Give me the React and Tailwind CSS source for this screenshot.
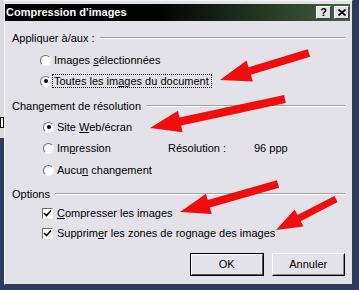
import React from 'react';

const font = { fontFamily: '"Liberation Sans", Arial, sans-serif' };

function arrowPoints(tx, ty, px, py, sw, hl, hw) {
  const dx = px - tx;
  const dy = py - ty;
  const len = Math.hypot(dx, dy);
  const ux = dx / len;
  const uy = dy / len;
  const nx = -uy;
  const ny = ux;
  const bx = px - ux * hl;
  const by = py - uy * hl;
  const pts = [
    [tx + (nx * sw) / 2, ty + (ny * sw) / 2],
    [bx + (nx * sw) / 2, by + (ny * sw) / 2],
    [bx + (nx * hw) / 2, by + (ny * hw) / 2],
    [px, py],
    [bx - (nx * hw) / 2, by - (ny * hw) / 2],
    [bx - (nx * sw) / 2, by - (ny * sw) / 2],
    [tx - (nx * sw) / 2, ty - (ny * sw) / 2],
  ];
  return pts.map((p) => p.map((v) => v.toFixed(1)).join(',')).join(' ');
}

const arrows = [
  [309, 53, 220, 80, 8, 31, 22],
  [285, 99, 150, 128, 8, 31, 22],
  [278, 184, 180, 212, 8, 30, 21],
  [336, 199, 276, 230, 7, 26, 19],
];

function Radio({ checked }) {
  return (
    <span className="relative w-[11px] h-[11px] shrink-0 rounded-full bg-white border border-t-[#6f6f74] border-l-[#6f6f74] border-r-[#f6f6f8] border-b-[#f6f6f8] flex items-center justify-center">
      {checked && <span className="w-[4px] h-[4px] rounded-full bg-black" />}
    </span>
  );
}

function Check() {
  return (
    <span className="w-[11px] h-[11px] shrink-0 bg-white border border-t-[#6f6f74] border-l-[#6f6f74] border-r-[#f6f6f8] border-b-[#f6f6f8] flex items-center justify-center">
      <svg width="9" height="9" viewBox="0 0 9 9">
        <path d="M1 4 L3.5 6.5 L8 1.5" fill="none" stroke="#000" strokeWidth="1.6" />
      </svg>
    </span>
  );
}

function GroupHeader({ label, className }) {
  return (
    <div className={`h-[14px] flex items-center ${className}`}>
      <span className="whitespace-nowrap">{label}</span>
      <div className="flex-1 ml-[5px] border-t border-t-[#a3a2a8] border-b border-b-white" />
    </div>
  );
}

export default function App() {
  return (
    <div className="relative w-[359px] h-[290px] overflow-hidden bg-[#2b3b5c] flex text-[11px] text-black" style={font}>
      <div className="w-[4px] shrink-0 flex flex-col">
        <div className="h-[117px] bg-[#d9d9de]" />
        <div className="h-[11px] border border-black bg-white" />
        <div className="h-[10px] bg-[#d9d9de]" />
        <div className="flex-1 bg-[#2b3b5c]" />
      </div>

      <div className="w-[349px] h-[285px] shrink-0 bg-[#e3e2e9] border border-t-[#f4f4f6] border-l-[#f4f4f6] border-r-[#3a3a44] border-b-[#3a3a44] flex flex-col">
        <div className="mt-[3px] mr-[2px] h-[17px] flex items-center bg-[linear-gradient(to_right,#000_0%,#020402_45%,#1e301e_70%,#44633f_100%)]">
          <span className="pl-[1px] font-bold text-white flex-1">Compression d'images</span>
          <div className="flex gap-[3px] pr-[1px]">
            <span className="w-[15px] h-[13px] bg-[#e3e2e9] border border-t-white border-l-white border-r-[#404048] border-b-[#404048] flex items-center justify-center font-bold text-[11px] leading-none">?</span>
            <span className="w-[15px] h-[13px] bg-[#e3e2e9] border border-t-white border-l-white border-r-[#404048] border-b-[#404048] flex items-center justify-center">
              <svg width="8" height="7" viewBox="0 0 8 7">
                <path d="M0.5 0.5 L7.5 6.5 M7.5 0.5 L0.5 6.5" stroke="#000" strokeWidth="1.7" />
              </svg>
            </span>
          </div>
        </div>

        <div className="pl-[7px] pr-[7px] flex flex-col">
          <GroupHeader label="Appliquer à/aux :" className="mt-[10px]" />

          <div className="mt-[8px] h-[14px] flex items-center pl-[28px]">
            <Radio />
            <span className="ml-[1px] border border-transparent pl-[1px] pr-[1px] leading-[12px]">
              Images <u>s</u>électionnées
            </span>
          </div>
          <div className="mt-[7px] h-[14px] flex items-center pl-[28px]">
            <Radio checked />
            <span className="ml-[1px] border border-dotted border-black pl-[1px] pr-[2px] leading-[12px]">
              Toutes les im<u>a</u>ges du document
            </span>
          </div>

          <GroupHeader label="Changement de résolution" className="mt-[11px]" />

          <div className="mt-[7px] h-[14px] flex items-center pl-[31px]">
            <Radio checked />
            <span className="ml-[3px]">
              Site <u>W</u>eb/écran
            </span>
          </div>
          <div className="mt-[7px] h-[14px] flex items-center pl-[31px]">
            <div className="w-[125px] flex items-center">
              <Radio />
              <span className="ml-[3px]">
                Im<u>p</u>ression
              </span>
            </div>
            <span className="w-[86px]">Résolution :</span>
            <span>96 ppp</span>
          </div>
          <div className="mt-[8px] h-[14px] flex items-center pl-[31px]">
            <Radio />
            <span className="ml-[3px]">
              Aucu<u>n</u> changement
            </span>
          </div>

          <GroupHeader label="Options" className="mt-[10px]" />

          <div className="mt-[5px] h-[14px] flex items-center pl-[30px]">
            <Check />
            <span className="ml-[4px]">
              <u>C</u>ompresser les images
            </span>
          </div>
          <div className="mt-[6px] h-[14px] flex items-center pl-[30px]">
            <Check />
            <span className="ml-[4px]">
              Supprim<u>e</u>r les zones de rognage des images
            </span>
          </div>

          <div className="mt-[13px] flex gap-[8px] pl-[178px]">
            <div className="w-[74px] h-[23px] border border-black">
              <div className="w-full h-full border border-t-white border-l-white border-r-[#55555c] border-b-[#55555c] flex items-center justify-center">
                OK
              </div>
            </div>
            <div className="w-[74px] h-[23px] border border-t-white border-l-white border-r-black border-b-black">
              <div className="w-full h-full border border-t-[#e3e2e9] border-l-[#e3e2e9] border-r-[#88888f] border-b-[#88888f] flex items-center justify-center">
                Annuler
              </div>
            </div>
          </div>
        </div>
      </div>

      <div className="flex-1 bg-[#2b3b5c]" />

      <svg className="absolute inset-0 pointer-events-none" width="359" height="290" viewBox="0 0 359 290">
        {arrows.map((a, i) => (
          <polygon key={i} points={arrowPoints(...a)} fill="#f20c0c" />
        ))}
      </svg>
    </div>
  );
}
